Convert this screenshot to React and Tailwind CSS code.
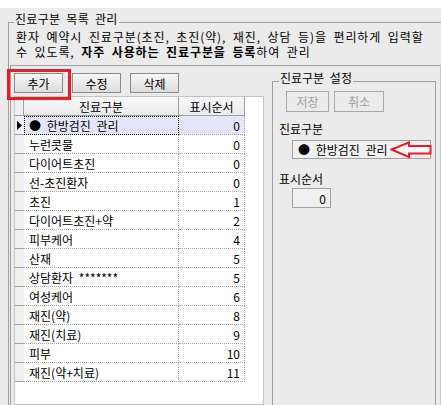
import React from "react";

const rows = [
  ["● 한방검진 관리", 0],
  ["누런콧물", 0],
  ["다이어트초진", 0],
  ["선-초진환자", 0],
  ["초진", 1],
  ["다이어트초진+약", 2],
  ["피부케어", 4],
  ["산재", 5],
  ["상담환자 *******", 5],
  ["여성케어", 6],
  ["재진(약)", 8],
  ["재진(치료)", 9],
  ["피부", 10],
  ["재진(약+치료)", 11],
];

// toolbar button (enabled look)
const ToolButton = ({ children }) => (
  <button className="w-[49px] h-[20px] flex items-center justify-center border border-[#8c8c8c] bg-gradient-to-b from-[#f7f7f7] to-[#dcdcdc] text-black">
    {children}
  </button>
);

const App = () => {
  return (
    <div className="relative w-[441px] h-[405px] overflow-hidden bg-[#ebebeb] text-[12px] leading-[15px] text-black [word-spacing:3px] font-['Noto_Sans_CJK_KR',sans-serif]">
      <div className="h-[8px] bg-white" />

      {/* group box: 진료구분 목록 관리 */}
      <div className="relative ml-[8px] mt-[14px] w-[440px] h-[383px] border-t border-l border-[#a0a0a0]">
        <span className="absolute left-[5px] top-[-11px] px-[1px] bg-[#ebebeb] leading-[14px] whitespace-nowrap tracking-[0.3px]">
          진료구분 목록 관리
        </span>

        <p className="ml-[7px] pt-[6px] whitespace-nowrap tracking-[0.9px]">
          환자 예약시 진료구분(초진, 초진(약), 재진, 상담 등)을 편리하게 입력할
          <br />
          수 있도록, <b>자주 사용하는 진료구분을 등록</b>하여 관리
        </p>

        {/* lower panel */}
        <div className="ml-[1px] mt-[6px] w-[431px] h-[340px] border-t border-l border-r border-t-[#a0a0a0] border-l-[#a0a0a0] border-r-[#c8c8c8] flex">
          {/* list column */}
          <div className="ml-[3px] pt-[7px] flex flex-col">
            <div className="flex gap-[9px]">
              <ToolButton>추가</ToolButton>
              <ToolButton>수정</ToolButton>
              <ToolButton>삭제</ToolButton>
            </div>

            <div className="mt-[3px] w-[250px] h-[320px] border border-[#bcc6d0] bg-white">
              {/* header */}
              <div className="flex h-[19px]">
                <div className="w-[9px] bg-[#f0f0f0] border-r border-b border-[#a0a0a0]" />
                <div className="w-[155px] flex items-center justify-center bg-gradient-to-b from-[#f8f8f8] to-[#ececec] border-r border-b border-[#a0a0a0]">
                  진료구분
                </div>
                <div className="w-[66px] flex items-center justify-center bg-gradient-to-b from-[#f8f8f8] to-[#ececec] border-r border-b border-[#a0a0a0]">
                  표시순서
                </div>
              </div>

              {rows.map(([name, order], i) => (
                <div key={i} className="flex h-[19px]">
                  <div className="w-[9px] flex items-center justify-center bg-[#f0f0f0] border-b border-[#a0a0a0]">
                    {i === 0 && (
                      <svg width="5" height="9" viewBox="0 0 5 9">
                        <polygon points="0,0 5,4.5 0,9" fill="#000" />
                      </svg>
                    )}
                  </div>
                  <div
                    className={
                      i === 0
                        ? "w-[155px] flex items-center pl-[5px] whitespace-nowrap bg-[#e6e6fa] border-r border-b border-dotted border-[#a8a8a8] outline-1 outline-dotted outline-black -outline-offset-1"
                        : "w-[155px] flex items-center pl-[5px] whitespace-nowrap border-r border-b border-dotted border-[#a8a8a8]"
                    }
                  >
                    {name}
                  </div>
                  <div
                    className={
                      i === 0
                        ? "w-[66px] flex items-center justify-end pr-[4px] bg-[#e6e6fa] border-r border-b border-dotted border-[#a8a8a8]"
                        : "w-[66px] flex items-center justify-end pr-[4px] border-r border-b border-dotted border-[#a8a8a8]"
                    }
                  >
                    {order}
                  </div>
                </div>
              ))}
            </div>
          </div>

          {/* group box: 진료구분 설정 */}
          <div className="relative ml-[8px] mt-[15px] w-[164px] h-[330px] border-t border-l border-r border-[#a0a0a0]">
            <span className="absolute left-[6px] top-[-11px] px-[1px] bg-[#ebebeb] leading-[14px] whitespace-nowrap">
              진료구분 설정
            </span>

            <div className="ml-[13px] mt-[9px] flex gap-[5px]">
              <button className="w-[43px] h-[21px] flex items-center justify-center border border-[#a8a8a8] text-[#a0a0a0]">
                저장
              </button>
              <button className="w-[50px] h-[21px] flex items-center justify-center border border-[#a8a8a8] text-[#a0a0a0]">
                취소
              </button>
            </div>

            <div className="ml-[6px] mt-[9px]">진료구분</div>
            <div className="relative ml-[19px] mt-[4px] w-[139px] h-[19px] flex items-center pl-[5px] whitespace-nowrap bg-[#f0f0f0] border border-[#a0a0a0]">
              ● 한방검진 관리
              <svg
                className="absolute left-[97px] top-[0px]"
                width="42"
                height="18"
                viewBox="0 0 42 18"
              >
                <path
                  d="M1.5 8.5 L19 1.5 L19 5 L40.5 5 L40.5 12.5 L19 12.5 L19 16 Z"
                  fill="#ffffff"
                  stroke="#ec1c24"
                  strokeWidth="2"
                  strokeLinejoin="miter"
                />
              </svg>
            </div>

            <div className="ml-[6px] mt-[12px]">표시순서</div>
            <div className="ml-[19px] mt-[2px] w-[39px] h-[20px] flex items-center justify-end pr-[4px] bg-[#f0f0f0] border border-[#a0a0a0]">
              0
            </div>
          </div>
        </div>
      </div>

      {/* red highlight around 추가 */}
      <div className="absolute left-[7px] top-[69px] w-[64px] h-[31px] border-[3px] border-[#ec1c24]" />
    </div>
  );
};

export default App;
